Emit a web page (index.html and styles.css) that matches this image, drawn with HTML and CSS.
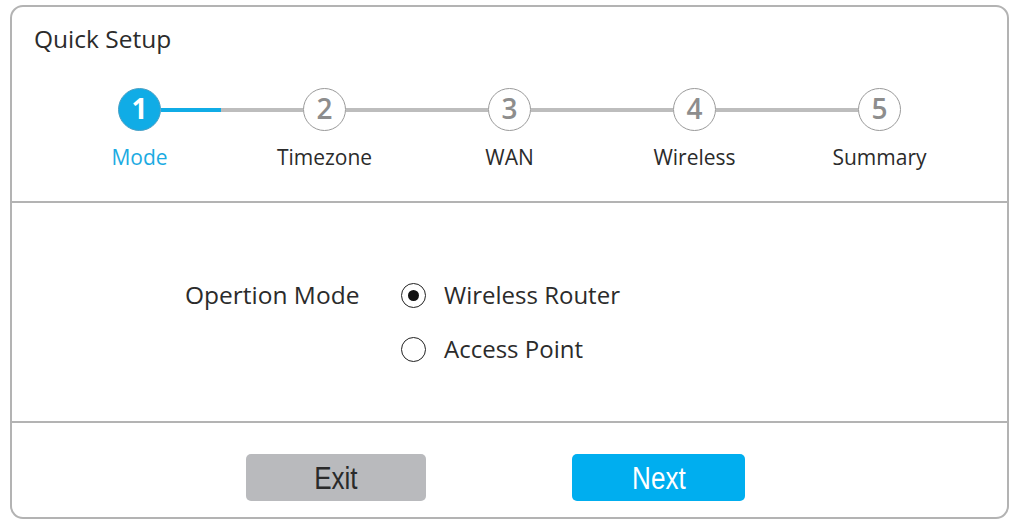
FILE: index.html
```html
<!DOCTYPE html>
<html>
<head>
<meta charset="utf-8">
<link rel="stylesheet" href="styles.css">
</head>
<body>
<div class="card">
  <section class="head">
    <h1 class="title">Quick Setup</h1>
    <div class="steps">
      <div class="step active">
        <div class="track"><span class="half none"></span><span class="dot">1</span><span class="half progress"></span></div>
        <div class="label">Mode</div>
      </div>
      <div class="step">
        <div class="track"><span class="half"></span><span class="dot">2</span><span class="half"></span></div>
        <div class="label">Timezone</div>
      </div>
      <div class="step">
        <div class="track"><span class="half"></span><span class="dot">3</span><span class="half"></span></div>
        <div class="label">WAN</div>
      </div>
      <div class="step">
        <div class="track"><span class="half"></span><span class="dot">4</span><span class="half"></span></div>
        <div class="label">Wireless</div>
      </div>
      <div class="step">
        <div class="track"><span class="half"></span><span class="dot">5</span><span class="half none"></span></div>
        <div class="label">Summary</div>
      </div>
    </div>
  </section>
  <section class="body">
    <div class="form">
      <div class="field-label">Opertion Mode</div>
      <div class="options">
        <label class="option"><span class="radio checked"></span><span>Wireless Router</span></label>
        <label class="option"><span class="radio"></span><span>Access Point</span></label>
      </div>
    </div>
  </section>
  <section class="foot">
    <button class="btn exit"><span class="btn-text">Exit</span></button>
    <button class="btn next"><span class="btn-text">Next</span></button>
  </section>
</div>
</body>
</html>
```

FILE: styles.css
```css
* { box-sizing: border-box; }
html, body { margin: 0; padding: 0; background: #fff; }
body {
  font-family: "Open Sans", "Liberation Sans", sans-serif;
  color: #2b2b2b;
  padding: 5px 0 0 10px;
}
.card {
  width: 999px;
  height: 514px;
  border: 2px solid #b3b3b3;
  border-radius: 13px;
  display: flex;
  flex-direction: column;
  overflow: hidden;
}
.head {
  height: 196px;
  border-bottom: 2px solid #b3b3b3;
  padding: 18px 0 0 22px;
}
.title {
  margin: 0;
  font-size: 24.5px;
  font-weight: 400;
  line-height: 28px;
  color: #2b2b2b;
}
.steps {
  display: grid;
  grid-template-columns: repeat(5, 185px);
  margin: 35px 0 0 13px;
}
.step { display: flex; flex-direction: column; align-items: center; }
.track { display: flex; align-items: center; width: 185px; height: 43px; }
.half { flex: 1; height: 4px; background: #bdbdbd; }
.half.none { background: transparent; }
.half.progress { background: linear-gradient(to right, #10ace6 0, #10ace6 60px, #bdbdbd 60px); }
.dot {
  width: 43px; height: 43px;
  border-radius: 50%;
  border: 1.5px solid #9a9a9a;
  background: #fff;
  color: #8d8d8d;
  font-weight: 600;
  font-size: 28px;
  line-height: 39px;
  text-align: center;
  flex: none;
}
.step.active .dot { background: #10ace6; border-color: #4a9fc4; color: #fff; font-weight: 700; }
.label {
  margin-top: 13px;
  font-size: 21px;
  line-height: 26px;
  color: #2b2b2b;
}
.step.active .label { color: #1cabe2; }

.body {
  height: 220px;
  border-bottom: 2px solid #b3b3b3;
  padding: 75px 0 0 173px;
}
.form { display: flex; }
.field-label {
  width: 216px;
  font-size: 24.5px;
  line-height: 34px;
}
.options { display: flex; flex-direction: column; gap: 20px; }
.option {
  display: flex; align-items: center; gap: 18px;
  font-size: 24px; line-height: 34px;
}
.radio {
  width: 25px; height: 25px;
  border: 1.5px solid #222;
  border-radius: 50%;
  display: flex; align-items: center; justify-content: center;
}
.radio.checked::after {
  content: "";
  width: 11px; height: 11px;
  border-radius: 50%;
  background: #111;
}

.foot {
  flex: 1;
  display: flex;
  align-items: flex-start;
  padding: 31px 0 0 234px;
  gap: 146px;
}
.btn {
  height: 47px;
  border: none;
  border-radius: 5px;
  font-family: "Liberation Sans", sans-serif;
  font-size: 31px;
  font-weight: 400;
  padding: 0 0 0 0;
  display: flex;
  align-items: center;
  justify-content: center;
}
.btn-text { display: inline-block; transform: scaleX(0.84); padding-top: 2px; }
.exit { width: 180px; background: #b9babd; color: #2a2a2a; }
.next { width: 173px; background: #00aeef; color: #fff; }
```
